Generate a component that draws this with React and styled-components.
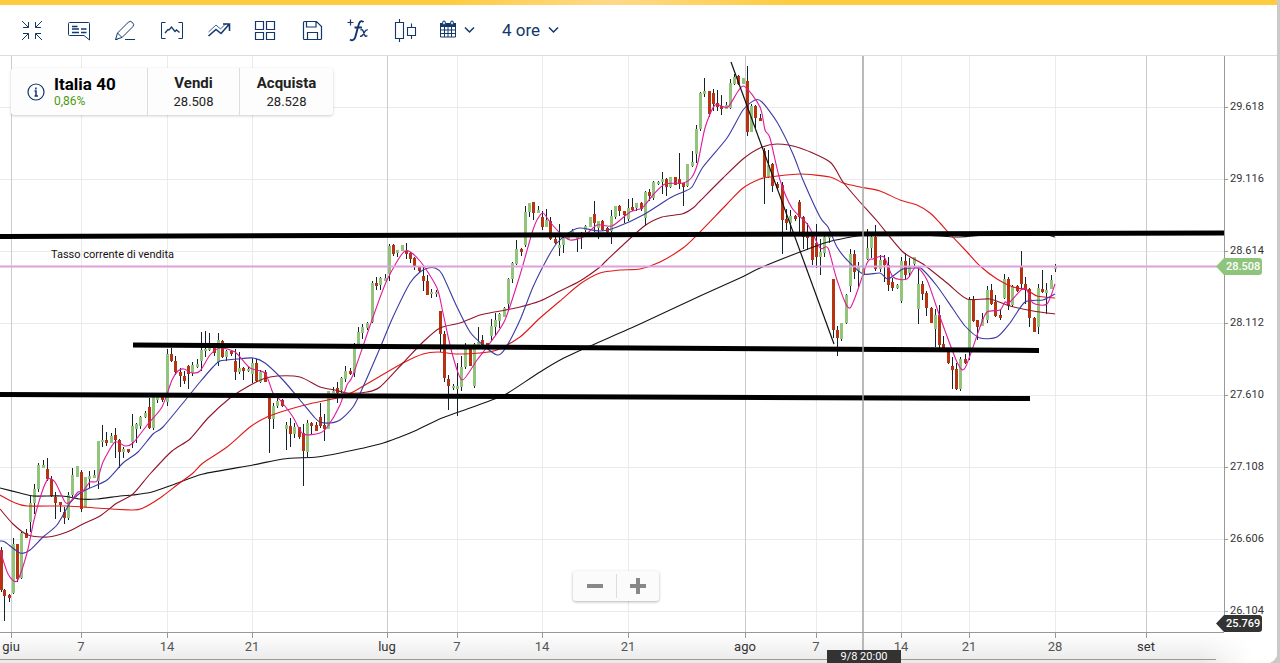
import { useState } from "react";
import styled, { createGlobalStyle } from "styled-components";

const GlobalStyle = createGlobalStyle`
  * {
    box-sizing: border-box;
  }
  body {
    margin: 0;
    background: #cacaca;
    color: #333;
    font-family: Roboto, "Liberation Sans", sans-serif;
  }
  button, select {
    margin: 0;
    padding: 0;
    border: 0;
    background: none;
    color: inherit;
    font: inherit;
    cursor: pointer;
  }
`;

const Page = styled.div`
  margin-right: 3px;
  overflow: hidden;
  background: #fff;
  border-radius: 0 0 10px 0;
`;

const Accent = styled.div`
  height: 5px;
  background: linear-gradient(90deg, #ffcb3f 35%, #ffd98a 48%, #ffcb3f 62%);
`;

const Toolbar = styled.header`
  display: flex;
  align-items: center;
  gap: 23px;
  height: 51px;
  padding: 0 20px 1px;
  border-bottom: 1px solid #dcdcdc;
  color: #12386b;
`;

const ToolGroup = styled.div`
  display: flex;
  justify-content: space-between;
  width: 397px;
`;

const ToolButton = styled.button`
  display: flex;
  align-items: center;
  gap: 8px;
`;

const Icon = styled.svg`
  display: block;
  fill: none;
  stroke: currentColor;
  stroke-width: ${(props) => props.$weight || 1};
`;

const Period = styled.label`
  display: flex;
  align-items: center;
  position: relative;
  margin-left: 4px;

  svg {
    position: absolute;
    right: 0;
    pointer-events: none;
  }
`;

const PeriodSelect = styled.select`
  appearance: none;
  padding-right: 18px;
  font-size: 17px;
  line-height: 24px;
  outline: none;
`;

const Board = styled.main`
  display: grid;
  grid-template-columns: minmax(0, 1fr) 53px;
  position: relative;
`;

const Plot = styled.div`
  position: relative;
`;

const PlotSvg = styled.svg`
  display: block;
  width: 100%;
  height: auto;
`;

const QuoteCard = styled.section`
  display: flex;
  position: absolute;
  top: 12px;
  left: 11px;
  background: #fdfdfd;
  border-radius: 3px;
  box-shadow: 0 1px 3px rgba(0, 0, 0, 0.2);
  color: #222;
`;

const Instrument = styled.div`
  display: flex;
  align-items: center;
  gap: 9px;
  width: 136px;
  padding-left: 16px;
`;

const InfoButton = styled.button`
  color: #12386b;
`;

const Name = styled.h1`
  margin: 0;
  color: #000;
  font-size: 17px;
  font-weight: 700;
  line-height: 18px;
`;

const Change = styled.div`
  color: #4c9a10;
  font-size: 12px;
  line-height: 16px;
`;

const Quote = styled.button`
  width: ${(props) => props.$width}px;
  padding: 6px 0 5px;
  border-left: 1px solid #ddd;
  font-size: 13px;
  line-height: 17px;
  text-align: center;

  strong {
    display: block;
    font-size: 15px;
    line-height: 19px;
  }
`;

const RateNote = styled.span`
  position: absolute;
  top: 192px;
  left: 51px;
  color: #111;
  font-size: 11px;
  line-height: 14px;
`;

const ZoomBar = styled.div`
  display: flex;
  align-items: flex-start;
  position: absolute;
  bottom: 31px;
  left: 573px;
  height: 30px;
  padding-top: 3px;
  background: #fbfbfb;
  border-radius: 3px;
  box-shadow: 0 1px 3px rgba(0, 0, 0, 0.3);
  color: #888;

  button + button {
    border-left: 1px solid #ddd;
  }
`;

const ZoomButton = styled.button`
  display: flex;
  align-items: center;
  justify-content: center;
  width: 43px;
  height: 24px;
`;

const PriceAxis = styled.ol`
  display: grid;
  grid-template-rows: repeat(8, 1fr);
  position: relative;
  margin: 0;
  padding: 0;
  list-style: none;
  border-left: 1px solid #999;
  font-size: 11px;
  line-height: 14px;
`;

const Price = styled.li`
  display: flex;
  align-items: flex-end;
  padding-bottom: 14px;

  &::before {
    width: 3px;
    height: 1px;
    margin: 0 2px 6px 0;
    background: #999;
    content: "";
  }
`;

const PriceTag = styled.output`
  position: absolute;
  left: -9px;
  width: 46px;
  padding-left: 10px;
  background: ${(props) => props.$color};
  border-radius: 0 3px 3px 0;
  clip-path: polygon(0 50%, 8px 0, 100% 0, 100% 100%, 8px 100%);
  color: #fff;
  font-size: 11px;
  font-weight: 500;
  line-height: 17px;
`;

const TimeAxis = styled.footer`
  position: relative;
  grid-column: 1 / -1;
  padding-right: 53px;
  background: linear-gradient(90deg, transparent 94%, #fff 98%),
    linear-gradient(#fff, #e9e9e9);
`;

const TimeTag = styled.output`
  position: absolute;
  bottom: 0;
  width: 74px;
  margin-left: -36px;
  background: #333;
  color: #fff;
  font-size: 11px;
  line-height: 13px;
  text-align: center;
`;

const prices = [
  "29.618",
  "29.116",
  "28.614",
  "28.112",
  "27.610",
  "27.108",
  "26.606",
  "26.104",
];

const dates = [
  [11, "giu", true],
  [81, "7"],
  [167, "14"],
  [252, "21"],
  [387, "lug", true],
  [457, "7"],
  [542, "14"],
  [628, "21"],
  [745, "ago", true],
  [816, "7"],
  [901, "14"],
  [969, "21"],
  [1055, "28"],
  [1146, "set", true],
];

// x, high, low, body top, body bottom, 1 = rising
const candles = [
  [1, 547, 592, 550, 590, 0], [4, 589, 621, 590, 596, 0], [9, 594, 602, 595, 598, 0],
  [13, 538, 594, 544, 593, 1], [17, 544, 582, 544, 579, 0], [21, 532, 579, 533, 578, 1],
  [26, 529, 538, 533, 538, 0], [30, 496, 532, 503, 522, 1], [34, 484, 514, 489, 503, 1],
  [38, 463, 492, 465, 489, 1], [43, 460, 468, 465, 468, 1], [47, 458, 481, 469, 479, 0],
  [51, 476, 497, 479, 496, 0], [55, 492, 519, 497, 503, 0], [60, 502, 512, 502, 505, 0],
  [64, 507, 524, 512, 518, 0], [68, 492, 520, 495, 518, 1], [72, 468, 497, 475, 495, 1],
  [77, 466, 477, 466, 477, 1], [81, 470, 512, 472, 509, 0], [85, 477, 508, 477, 508, 1],
  [89, 471, 488, 476, 479, 1], [94, 470, 478, 475, 478, 1], [98, 441, 489, 441, 481, 1],
  [102, 425, 447, 440, 442, 1], [106, 432, 446, 440, 443, 0], [111, 433, 443, 436, 443, 1],
  [115, 428, 458, 435, 440, 0], [119, 439, 468, 440, 452, 0], [123, 447, 458, 449, 452, 1],
  [128, 449, 453, 449, 452, 0], [132, 414, 448, 426, 442, 1], [136, 423, 443, 424, 429, 1],
  [140, 416, 429, 417, 426, 1], [145, 411, 418, 413, 417, 1], [149, 398, 429, 407, 428, 0],
  [153, 395, 430, 396, 428, 1], [157, 397, 403, 397, 400, 1], [162, 397, 402, 397, 400, 0],
  [167, 349, 406, 354, 402, 1], [171, 348, 362, 354, 361, 0], [175, 356, 375, 361, 372, 0],
  [180, 368, 387, 372, 376, 0], [184, 371, 384, 376, 381, 0], [188, 365, 389, 366, 374, 0],
  [192, 362, 376, 365, 373, 1], [197, 359, 368, 364, 367, 1], [201, 332, 371, 350, 361, 1],
  [205, 331, 357, 349, 351, 1], [209, 333, 351, 348, 350, 1], [214, 347, 356, 348, 353, 0],
  [218, 333, 366, 340, 362, 1], [222, 340, 358, 341, 357, 0], [226, 350, 361, 351, 357, 1],
  [231, 350, 356, 351, 354, 0], [235, 349, 380, 361, 372, 0], [239, 352, 374, 368, 372, 1],
  [243, 367, 380, 368, 371, 0], [248, 367, 372, 369, 371, 1], [252, 358, 383, 363, 374, 1],
  [256, 359, 382, 363, 381, 0], [260, 370, 383, 372, 382, 1], [265, 370, 382, 372, 382, 0],
  [269, 398, 453, 398, 419, 0], [273, 403, 429, 406, 419, 1], [277, 393, 408, 401, 406, 1],
  [282, 399, 407, 400, 406, 0], [286, 422, 450, 425, 429, 1], [290, 418, 447, 426, 434, 0],
  [294, 423, 438, 427, 434, 1], [299, 427, 439, 427, 437, 0], [303, 424, 486, 433, 451, 0],
  [307, 420, 457, 423, 452, 1], [311, 422, 435, 423, 426, 0], [316, 422, 431, 425, 431, 0],
  [320, 403, 428, 417, 426, 0], [324, 414, 441, 425, 429, 0], [328, 391, 429, 391, 429, 1],
  [333, 387, 393, 391, 393, 1], [337, 382, 403, 388, 393, 0], [341, 377, 393, 378, 390, 1],
  [345, 366, 382, 371, 379, 1], [350, 368, 375, 371, 374, 0], [354, 343, 377, 344, 373, 1],
  [358, 327, 345, 332, 344, 1], [362, 324, 339, 327, 333, 1], [367, 322, 330, 323, 328, 1],
  [372, 281, 323, 283, 322, 1], [376, 277, 290, 283, 286, 0], [380, 277, 290, 278, 285, 1],
  [385, 274, 281, 278, 281, 1], [389, 244, 281, 246, 274, 1], [393, 244, 256, 245, 254, 0],
  [397, 250, 257, 250, 253, 1], [402, 245, 251, 245, 251, 1], [406, 243, 259, 251, 254, 0],
  [410, 252, 263, 253, 259, 0], [414, 257, 270, 258, 266, 0], [419, 267, 272, 267, 271, 0],
  [423, 267, 291, 276, 281, 0], [427, 275, 295, 281, 295, 0], [431, 289, 298, 292, 294, 1],
  [436, 290, 297, 292, 294, 1], [440, 311, 352, 311, 334, 0], [444, 331, 382, 334, 378, 0],
  [448, 375, 410, 379, 386, 0], [453, 384, 390, 386, 388, 1], [457, 363, 416, 386, 389, 1],
  [461, 356, 391, 367, 387, 1], [465, 343, 369, 347, 367, 1], [470, 348, 366, 348, 366, 0],
  [474, 343, 388, 344, 386, 1], [478, 327, 345, 342, 345, 1], [482, 335, 345, 340, 345, 0],
  [487, 343, 346, 343, 346, 0], [491, 319, 341, 326, 336, 1], [495, 313, 336, 320, 327, 1],
  [499, 313, 328, 314, 321, 1], [504, 307, 317, 308, 317, 1], [508, 278, 310, 279, 304, 1],
  [512, 262, 283, 263, 279, 1], [516, 240, 265, 249, 264, 1], [521, 248, 256, 249, 252, 0],
  [525, 206, 247, 212, 245, 1], [529, 203, 217, 203, 212, 1], [533, 202, 220, 202, 213, 0],
  [538, 206, 213, 210, 213, 1], [542, 211, 230, 217, 227, 0], [546, 209, 227, 220, 227, 1],
  [550, 217, 240, 221, 239, 0], [555, 237, 244, 239, 243, 0], [559, 224, 256, 245, 248, 1],
  [563, 237, 253, 238, 245, 1], [568, 233, 240, 234, 239, 1], [572, 229, 234, 231, 234, 1],
  [577, 237, 252, 237, 239, 1], [581, 232, 249, 233, 237, 1], [585, 225, 232, 226, 230, 1],
  [590, 217, 227, 217, 227, 1], [594, 201, 232, 214, 223, 0], [598, 221, 239, 221, 228, 1],
  [602, 220, 231, 221, 230, 0], [607, 227, 233, 228, 232, 0], [611, 210, 244, 216, 231, 1],
  [615, 206, 219, 206, 217, 1], [619, 205, 216, 206, 211, 0], [624, 211, 223, 211, 215, 0],
  [628, 199, 221, 208, 219, 1], [632, 198, 211, 207, 210, 0], [636, 203, 211, 203, 208, 1],
  [641, 202, 211, 203, 209, 0], [645, 191, 226, 192, 218, 1], [649, 189, 201, 192, 196, 0],
  [653, 181, 200, 182, 198, 1], [658, 181, 185, 182, 184, 1], [662, 172, 194, 179, 182, 1],
  [666, 178, 196, 179, 187, 0], [670, 177, 188, 177, 187, 1], [675, 177, 185, 177, 185, 0],
  [679, 153, 189, 179, 184, 0], [683, 183, 206, 183, 187, 0], [687, 164, 187, 164, 186, 1],
  [692, 151, 167, 162, 166, 1], [696, 125, 163, 129, 154, 1], [700, 92, 131, 93, 129, 1],
  [704, 78, 97, 91, 94, 1], [709, 91, 117, 91, 114, 0], [713, 89, 111, 93, 104, 0],
  [717, 90, 111, 103, 107, 0], [721, 95, 115, 106, 109, 0], [726, 102, 109, 105, 109, 1],
  [730, 79, 109, 83, 108, 1], [734, 74, 85, 77, 84, 1], [738, 75, 85, 76, 84, 0],
  [743, 78, 84, 78, 84, 1], [747, 66, 136, 81, 132, 0], [751, 104, 132, 106, 132, 1],
  [755, 105, 128, 106, 118, 0], [760, 114, 121, 118, 121, 0], [764, 148, 204, 151, 177, 0],
  [768, 150, 178, 165, 177, 1], [772, 163, 192, 164, 186, 0], [777, 182, 189, 184, 188, 0],
  [782, 182, 254, 185, 220, 0], [786, 209, 230, 219, 223, 0], [790, 210, 232, 216, 223, 1],
  [795, 215, 221, 216, 219, 0], [799, 200, 233, 202, 217, 0], [803, 216, 249, 217, 237, 0],
  [807, 223, 250, 235, 238, 0], [812, 235, 265, 236, 260, 0], [816, 224, 268, 243, 257, 0],
  [820, 239, 275, 252, 257, 1], [824, 236, 257, 237, 253, 1], [829, 235, 243, 236, 238, 1],
  [833, 279, 338, 279, 330, 0], [837, 326, 356, 330, 338, 0], [841, 323, 341, 323, 339, 1],
  [846, 294, 324, 295, 323, 1], [850, 249, 292, 254, 286, 1], [854, 250, 279, 254, 272, 0],
  [858, 262, 287, 267, 271, 1], [863, 268, 276, 269, 275, 0], [867, 229, 260, 248, 259, 1],
  [871, 233, 258, 237, 248, 1], [875, 225, 271, 237, 269, 0], [880, 255, 272, 260, 269, 1],
  [884, 255, 282, 260, 265, 0], [888, 257, 291, 265, 285, 0], [892, 278, 291, 282, 288, 0],
  [897, 284, 289, 285, 288, 1], [901, 257, 303, 261, 301, 1], [905, 253, 279, 261, 275, 0],
  [909, 258, 277, 266, 273, 1], [914, 257, 268, 257, 264, 1], [918, 269, 324, 284, 309, 1],
  [922, 281, 300, 284, 294, 0], [926, 291, 316, 293, 308, 0], [931, 307, 323, 308, 323, 0],
  [935, 309, 347, 315, 329, 1], [939, 305, 348, 315, 345, 0], [943, 336, 349, 344, 349, 0],
  [948, 350, 364, 352, 363, 0], [952, 357, 389, 366, 370, 0], [956, 363, 390, 369, 389, 0],
  [960, 357, 391, 359, 389, 1], [965, 354, 364, 359, 363, 0], [969, 297, 360, 299, 348, 1],
  [973, 296, 322, 299, 321, 0], [977, 320, 340, 320, 327, 0], [982, 313, 326, 319, 326, 1],
  [987, 286, 323, 290, 320, 1], [991, 284, 305, 290, 304, 0], [995, 295, 317, 302, 316, 0],
  [1000, 309, 320, 315, 318, 0], [1004, 274, 299, 279, 298, 1], [1008, 277, 310, 279, 306, 0],
  [1012, 285, 307, 286, 305, 1], [1017, 285, 292, 286, 291, 0], [1021, 251, 289, 267, 284, 0],
  [1025, 277, 304, 284, 289, 0], [1029, 288, 327, 289, 318, 0], [1034, 317, 332, 318, 332, 0],
  [1038, 284, 334, 288, 327, 1], [1042, 270, 293, 289, 292, 0], [1046, 283, 314, 290, 293, 1],
  [1051, 275, 289, 280, 289, 1], [1055, 264, 272, 266, 269, 1],
];

const averages = [
  {
    color: "#151515",
    points:
      "0,488 20,493 33,496 62,496 80,499 97,499 120,496 133,495 152,492 175,484 203,474 253,465 283,459 317,457 340,453 380,444 400,437 417,430 442,418 470,408 497,398 508,393 540,372 562,359 590,346 640,324 700,296 740,278 760,268 800,252 828,242 857,236 875,234 900,234 940,236 960,237 1000,234 1045,235 1055,237",
  },
  {
    color: "#e01818",
    points:
      "0,495 13,502 27,506 67,506 97,508 133,510 143,508 160,498 177,485 193,473 203,463 227,447 250,427 267,417 287,410 313,403 337,398 353,392 377,378 403,363 423,354 438,352 457,354 480,353 497,350 520,337 540,318 560,301 580,284 600,273 620,270 640,269 660,262 683,248 697,235 727,204 743,188 760,179 770,177 800,174 830,177 843,183 860,187 880,191 900,200 917,205 930,213 940,223 948,232 967,252 980,266 997,279 1013,287 1027,290 1037,296 1055,298",
  },
  {
    color: "#92142a",
    points:
      "0,509 13,524 28,535 48,537 67,532 83,524 100,516 117,503 133,494 150,474 172,451 190,439 208,418 230,398 247,387 263,379 277,376 300,377 320,387 335,390 347,393 367,392 380,387 403,363 423,342 440,328 460,323 480,315 500,311 520,307 540,301 560,291 580,281 600,267 607,260 643,227 662,217 682,214 693,208 700,201 723,178 743,159 760,148 777,144 800,148 830,162 843,182 860,202 877,221 903,252 923,264 947,283 967,299 990,299 1010,306 1033,311 1055,314",
  },
  {
    color: "#3a3aa4",
    points:
      "0,541 5,542 20,553 30,550 43,537 57,525 70,503 80,493 90,488 107,480 123,463 138,452 153,434 163,427 187,398 200,382 213,367 220,361 237,359 253,358 265,363 283,380 300,400 315,418 320,422 330,423 340,420 353,407 363,387 380,348 393,317 410,283 420,272 428,268 435,268 442,274 457,307 470,332 483,345 497,355 505,349 520,320 533,287 547,259 557,243 570,232 580,228 600,231 617,227 643,215 670,198 683,192 692,187 703,167 727,138 743,110 755,100 762,102 777,122 793,154 803,180 820,217 828,227 837,247 847,260 863,274 880,273 888,279 903,269 917,268 922,269 937,286 953,309 965,326 980,338 997,337 1010,323 1025,302 1043,300 1055,294",
  },
  {
    color: "#e01a9c",
    points:
      "0,550 8,574 17,581 27,553 34,520 42,492 48,479 55,482 65,502 70,502 78,492 83,491 90,482 97,481 103,462 115,442 125,446 133,443 148,424 162,407 172,380 178,371 184,369 192,373 200,371 210,355 220,348 235,352 250,368 265,373 273,393 280,400 293,417 303,434 320,433 328,426 340,405 347,385 353,375 372,320 387,280 405,251 420,261 437,288 443,313 452,353 462,380 477,360 490,343 505,320 520,275 532,233 537,220 543,213 550,222 560,233 570,240 583,237 597,225 612,226 630,212 642,208 653,195 665,184 683,183 692,177 698,162 705,128 715,105 728,107 743,86 760,107 765,130 770,138 780,180 792,208 808,225 820,248 828,248 837,280 850,308 867,263 873,259 884,257 893,277 907,279 916,267 927,280 940,317 957,362 965,368 980,327 987,312 1000,310 1005,302 1009,303 1022,289 1027,290 1033,303 1047,304 1055,284",
  },
];

// rounds the corners of an average by bending each step towards its neighbours
const toCurve = (points) => {
  const p = points.split(" ").map((pair) => pair.split(",").map(Number));
  return p.slice(1).reduce((d, end, i) => {
    const start = p[i];
    const before = p[i - 1] || start;
    const after = p[i + 2] || end;
    const c1 = [0, 1].map((k) => start[k] + (end[k] - before[k]) / 8);
    const c2 = [0, 1].map((k) => end[k] - (after[k] - start[k]) / 8);
    return `${d}C${c1} ${c2} ${end}`;
  }, `M${p[0]}`);
};

const tools = [
  {
    label: "Riduci",
    art: (
      <path d="M2 3l6.5 6.5m0-5.5v5.5H3M22 3l-6.5 6.5m0-5.5v5.5H21M2 22l6.5-6.5M3 15.5h5.5V21M22 22l-6.5-6.5m5.5 0h-5.5V21" />
    ),
  },
  {
    label: "Note",
    art: (
      <>
        <path d="M2.500 4.500h19q1 0 1 1v16.500l-5.500-4.500h-14.500q-1 0-1-1v-11q0-1 1-1z" />
        <path d="M5 8.500h5.500M5 11h7M14 11h5.500M5 14.500h7M14 14.500h5.500" strokeWidth="1.3" />
      </>
    ),
  },
  {
    label: "Disegna",
    art: (
      <>
        <path d="M2.500 21.500l2-6.500L15.500 4q2-1.500 4 .500t.500 4L9 19.500z" />
        <path d="M4.500 15l4.500 4.500M2.500 21.500h2M12 21.500h10" />
      </>
    ),
  },
  {
    label: "Intervallo",
    art: (
      <>
        <path d="M5.500 4.500h-4v16h4M18.500 4.500h4v16h-4" />
        <path d="M5 15l3-3.500 1 .5 2.500-3 3.500 4.500 1.500-1.500 3 2.500" strokeWidth="1.3" />
      </>
    ),
  },
  {
    label: "Tendenza",
    art: (
      <>
        <path d="M1.500 14L9 7l4.500 4L19 5.500" strokeWidth="0.8" />
        <path d="M1.500 18L9 11.500l5 4L22 6.500M16 6h6.500v7" strokeWidth="1.6" />
      </>
    ),
  },
  {
    label: "Griglia",
    art: (
      <path d="M2.500 3.500h8v8h-8zM13.500 3.500h8v8h-8zM2.500 14.500h8v7h-8zM13.500 14.500h8v7h-8z" strokeWidth="1.2" />
    ),
  },
  {
    label: "Salva",
    art: (
      <path d="M4.500 3.500h12l5 5v12q0 1-1 1h-16q-1 0-1-1v-16q0-1 1-1zM6.500 3.500v5.500h9.500V3.500M7.500 21.500v-7h10v7" strokeWidth="1.2" />
    ),
  },
  {
    label: "Indicatori",
    art: (
      <>
        <path d="M1.500 4.500h6M4.500 1.500v6" strokeWidth="1.2" />
        <path d="M17.500 4.200q-1.800-2-3.600-.2c-1.900 2.200-3.300 12-5.100 16.200q-1.900 3.300-4.800 1.300M8.500 9.500h7.500" strokeWidth="1.9" />
        <path d="M14.500 12.200q1.700-1.500 2.600.8l1.500 4q.9 2.300 2.700.6M21.800 11.900q-1.800-.4-3 1.800l-1.800 3q-1.200 2-2.900 1.300" strokeWidth="1.4" />
      </>
    ),
  },
  {
    label: "Tipo di grafico",
    art: (
      <path d="M2.500 4.500h8v16h-8zM6.500 1v3.500M6.500 20.500V24M14.500 9.500h8v8h-8zM18.500 5.500v4M18.500 17.500v3.500" strokeWidth="1.1" />
    ),
  },
];

const Chevron = () => (
  <Icon width="11" height="8" $weight={1.5} aria-hidden="true">
    <path d="M1 1.500l4.500 4.500L10 1.500" />
  </Icon>
);

const Chart = () => (
  <PlotSvg viewBox="0 56 1224 576" role="img" aria-label="Italia 40, 4 ore">
    {prices.map((price, i) => (
      <path key={price} d={`M0 ${107.5 + i * 72}H1224`} stroke="#ebebeb" />
    ))}
    {dates.map(([x, , month]) => (
      <path key={x} d={`M${x + 0.5} 56V632`} stroke={month ? "#cccccc" : "#ebebeb"} />
    ))}
    {candles.map(([x, high, low, top, bottom, up]) => (
      <g key={x}>
        <rect x={x} y={high} width="1" height={low - high} fill="#14232b" />
        <rect
          x={x - 1}
          y={top}
          width="3"
          height={bottom - top}
          fill={up ? "#92c47c" : "#b73412"}
        />
      </g>
    ))}
    <g fill="none" strokeWidth="1.1" strokeLinejoin="round">
      {averages.map(({ color, points }) => (
        <path key={color} d={toCurve(points)} stroke={color} />
      ))}
    </g>
    <path d="M0 266.500H1224" stroke="#dda0dd" strokeWidth="2" />
    <path d="M731 62L834 344" stroke="#111" strokeWidth="1.2" />
    <g stroke="#000" strokeWidth="5">
      <path d="M0 236.500L1224 233" />
      <path d="M133 345L1039 350.500" />
      <path d="M0 394.500L1030 398.500" />
    </g>
    <path d="M863 56V632" stroke="#a3a3a3" strokeWidth="1.500" />
  </PlotSvg>
);

const App = () => {
  const [period, setPeriod] = useState("4 ore");

  return (
    <>
      <GlobalStyle />
      <Page>
        <Accent />
        <Toolbar>
          <ToolGroup>
            {tools.map(({ label, art }) => (
              <ToolButton key={label} aria-label={label}>
                <Icon width="24" height="24">{art}</Icon>
              </ToolButton>
            ))}
          </ToolGroup>
          <ToolButton aria-label="Calendario">
            <Icon width="16" height="24">
              <path d="M.5 5.500h15v13.500H.5zM.5 12h15M.5 15.500h15M4.500 8v11M8 8v11M11.500 8v11" />
              <path d="M0 5h16v4H0z" fill="currentColor" stroke="none" />
              <rect x="2.500" y="3" width="3" height="4" rx="1.500" fill="#c5d0e0" />
              <rect x="10.500" y="3" width="3" height="4" rx="1.500" fill="#c5d0e0" />
            </Icon>
            <Chevron />
          </ToolButton>
          <Period>
            <PeriodSelect
              aria-label="Periodo"
              value={period}
              onChange={(e) => setPeriod(e.target.value)}
            >
              <option>1 ora</option>
              <option>4 ore</option>
            </PeriodSelect>
            <Chevron />
          </Period>
        </Toolbar>
        <Board>
          <Plot>
            <Chart />
            <QuoteCard>
              <Instrument>
                <InfoButton aria-label="Informazioni">
                  <Icon width="18" height="18">
                    <circle cx="9" cy="9" r="8" strokeWidth="1.2" />
                    <path d="M7.500 8h1.500v5M7.500 13h3.500M8.900 4.500v2" strokeWidth="1.5" />
                  </Icon>
                </InfoButton>
                <div>
                  <Name>Italia 40</Name>
                  <Change>0,86%</Change>
                </div>
              </Instrument>
              <Quote $width={92}>
                <strong>Vendi</strong>
                28.508
              </Quote>
              <Quote $width={94}>
                <strong>Acquista</strong>
                28.528
              </Quote>
            </QuoteCard>
            <RateNote>Tasso corrente di vendita</RateNote>
            <ZoomBar>
              <ZoomButton aria-label="Riduci zoom">
                <Icon width="16" height="16" $weight={4}>
                  <path d="M0 8h16" />
                </Icon>
              </ZoomButton>
              <ZoomButton aria-label="Aumenta zoom">
                <Icon width="16" height="16" $weight={4}>
                  <path d="M0 8h16M8 0v16" />
                </Icon>
              </ZoomButton>
            </ZoomBar>
          </Plot>
          <PriceAxis>
            {prices.map((price) => (
              <Price key={price}>{price}</Price>
            ))}
            <PriceTag $color="#8fc47c" style={{ top: `${(202 / 576) * 100}%` }}>
              28.508
            </PriceTag>
            <PriceTag $color="#333" style={{ top: `${(559 / 576) * 100}%` }}>
              25.769
            </PriceTag>
          </PriceAxis>
          <TimeAxis>
            <PlotSvg viewBox="0 632 1224 31">
              <path d="M0 632.500H1225M0 659.500H1216" stroke="#999" />
              <path d="M863 632V650" stroke="#a3a3a3" strokeWidth="1.500" />
              {dates.map(([x, label, month]) => (
                <g key={x}>
                  <path d={`M${x + 0.5} 632V638`} stroke="#999" />
                  <text
                    x={x}
                    y="651"
                    fontSize="13"
                    textAnchor="middle"
                    fill={month ? "#333" : "#555"}
                  >
                    {label}
                  </text>
                </g>
              ))}
            </PlotSvg>
            <TimeTag style={{ left: `${(863 / 1277) * 100}%` }}>9/8 20:00</TimeTag>
          </TimeAxis>
        </Board>
      </Page>
    </>
  );
};

export default App;
